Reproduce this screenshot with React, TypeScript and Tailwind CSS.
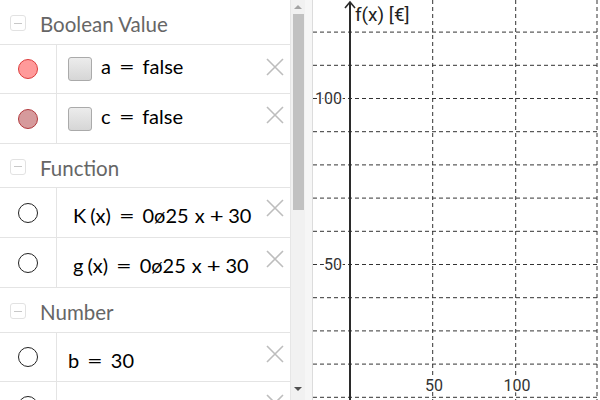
import React from "react";

const formulaFont = { fontFamily: "Lato, 'DejaVu Sans', sans-serif" };

function Collapse() {
  return (
    <div className="ml-[10px] flex h-[16px] w-[16px] items-center justify-center rounded-[3px] border border-[#e2e2e2]">
      <div className="h-[1px] w-[8px] bg-[#c8c8c8]" />
    </div>
  );
}

function Header({ title, h }: { title: string; h: string }) {
  return (
    <div className={`flex shrink-0 items-center border-b border-[#e4e4e4] pt-[2px] ${h}`}>
      <Collapse />
      <span className="ml-[14px] pt-[3px] text-[20.5px] text-[#666]" style={formulaFont}>
        {title}
      </span>
    </div>
  );
}

function Close({ top }: { top: string }) {
  return (
    <svg className={`absolute right-[6px] ${top}`} width="18" height="18" viewBox="0 0 18 18">
      <path d="M1 1 L17 17 M17 1 L1 17" stroke="#bdbdbd" strokeWidth="1.6" />
    </svg>
  );
}

function Marble({ fill, stroke }: { fill: string; stroke: string }) {
  return (
    <div
      className="h-[20px] w-[20px] rounded-full border"
      style={{ background: fill, borderColor: stroke }}
    />
  );
}

function Row({
  h,
  marble,
  children,
  closeTop,
  textPad,
}: {
  h: string;
  marble: React.ReactNode;
  children: React.ReactNode;
  closeTop: string;
  textPad: string;
}) {
  return (
    <div className={`relative flex shrink-0 border-b border-[#e4e4e4] ${h}`}>
      <div className="flex w-[57px] items-center justify-center border-r border-[#e4e4e4]">{marble}</div>
      <div className={`flex flex-1 items-center text-[20px] text-black ${textPad}`} style={formulaFont}>
        {children}
      </div>
      <Close top={closeTop} />
    </div>
  );
}

const Eq = () => <span className="mx-[10px] inline-block scale-x-[1.35]">=</span>;
const Plus = () => <span className="mx-[6px] inline-block scale-x-[1.2]">+</span>;

function Checkbox() {
  return (
    <div className="ml-[11px] mr-[9px] h-[24px] w-[24px] shrink-0 rounded-[3px] border border-[#aaa] bg-gradient-to-b from-[#ececec] to-[#d6d6d6]" />
  );
}

function AlgebraView() {
  return (
    <div className="flex w-[291px] shrink-0 flex-col overflow-hidden border-r border-[#e6e6e6] bg-white">
      <Header title="Boolean Value" h="h-[45px]" />
      <Row h="h-[49px]" closeTop="top-[13px]" textPad="" marble={<Marble fill="#ff9a9a" stroke="#dd3c3c" />}>
        <Checkbox />
        <span className="-mt-[6px] flex items-center">
          <span>a</span>
          <Eq />
          <span>false</span>
        </span>
      </Row>
      <Row h="h-[50px]" closeTop="top-[12px]" textPad="" marble={<Marble fill="#d69a9c" stroke="#b23a3e" />}>
        <Checkbox />
        <span className="-mt-[6px] flex items-center">
          <span>c</span>
          <Eq />
          <span>false</span>
        </span>
      </Row>
      <Header title="Function" h="h-[44px]" />
      <Row h="h-[50px]" closeTop="top-[11px]" textPad="pl-[16px] pt-[4px]" marble={<Marble fill="#fff" stroke="#222" />}>
        <span>K</span>
        <span className="ml-[4px]">(x)</span>
        <Eq />
        <span>0ø25</span>
        <span className="ml-[6px]">x</span>
        <Plus />
        <span>30</span>
      </Row>
      <Row h="h-[50px]" closeTop="top-[12px]" textPad="pl-[16px] pt-[5px]" marble={<Marble fill="#fff" stroke="#222" />}>
        <span>g</span>
        <span className="ml-[4px]">(x)</span>
        <Eq />
        <span>0ø25</span>
        <span className="ml-[6px]">x</span>
        <Plus />
        <span>30</span>
      </Row>
      <Header title="Number" h="h-[45px]" />
      <Row h="h-[49px]" closeTop="top-[12px]" textPad="pl-[11px] pt-[6px]" marble={<Marble fill="#fff" stroke="#222" />}>
        <span>b</span>
        <Eq />
        <span>30</span>
      </Row>
      <div className="relative flex h-[49px] shrink-0">
        <div className="flex w-[57px] items-start justify-center border-r border-[#e4e4e4] pt-[14px]">
          <Marble fill="#fff" stroke="#222" />
        </div>
        <Close top="top-[12px]" />
      </div>
    </div>
  );
}

function Scrollbar() {
  return (
    <div className="flex w-[14px] shrink-0 flex-col items-center bg-[#f1f1f1]">
      <div className="flex h-[14px] items-center justify-center">
        <div className="h-0 w-0 border-x-[4px] border-b-[4px] border-x-transparent border-b-[#a3a3a3]" />
      </div>
      <div className="h-[196px] w-[11px] bg-[#c1c1c1]" />
      <div className="flex-1" />
      <div className="flex h-[22px] items-center justify-center">
        <div className="h-0 w-0 border-x-[4px] border-t-[4px] border-x-transparent border-t-[#505050]" />
      </div>
    </div>
  );
}

function Graphics() {
  // origin of graphics panel is x=313 in page coordinates
  const ox = 313;
  const axisX = 350 - ox;
  const vLines = [432.7, 515.7, 597].map((x) => x - ox);
  const hLines = Array.from({ length: 12 }, (_, i) => 32.1 + i * 33.2);
  const labelStyle = { fontFamily: "Roboto, 'Liberation Sans', sans-serif" };
  return (
    <div className="relative flex-1 bg-white">
      <svg width="287" height="400" className="block">
        {hLines.map((y) => (
          <line key={y} x1="0" x2="287" y1={y} y2={y} stroke="#333" strokeWidth="1" strokeDasharray="4 3" />
        ))}
        {vLines.map((x) => (
          <line key={x} x1={x} x2={x} y1="0" y2="400" stroke="#333" strokeWidth="1" strokeDasharray="4 3" />
        ))}
        <g style={labelStyle} fontSize="16" fill="#333" stroke="#fff" strokeWidth="3" paintOrder="stroke">
          <text x={342 - ox} y="104" textAnchor="end">100</text>
          <text x={342 - ox} y="270" textAnchor="end">50</text>
          <text x={434 - ox} y="391" textAnchor="middle">50</text>
          <text x={517 - ox} y="391" textAnchor="middle">100</text>
        </g>
        <line x1={axisX} x2={axisX} y1="2" y2="400" stroke="#2b2b2b" strokeWidth="2" />
        <path d={`M${axisX - 5} 8 L${axisX} 2 L${axisX + 5} 8`} fill="none" stroke="#2b2b2b" strokeWidth="1.6" />
        <text x={355 - ox} y="21" fontSize="19" fill="#222" style={labelStyle}>
          f(x) [€]
        </text>
      </svg>
    </div>
  );
}

export default function App() {
  return (
    <div className="flex h-[400px] w-[600px] overflow-hidden bg-white">
      <AlgebraView />
      <Scrollbar />
      <div className="w-[8px] shrink-0 border-r border-[#dcdcdc] bg-[#f6f6f6]" />
      <Graphics />
    </div>
  );
}
